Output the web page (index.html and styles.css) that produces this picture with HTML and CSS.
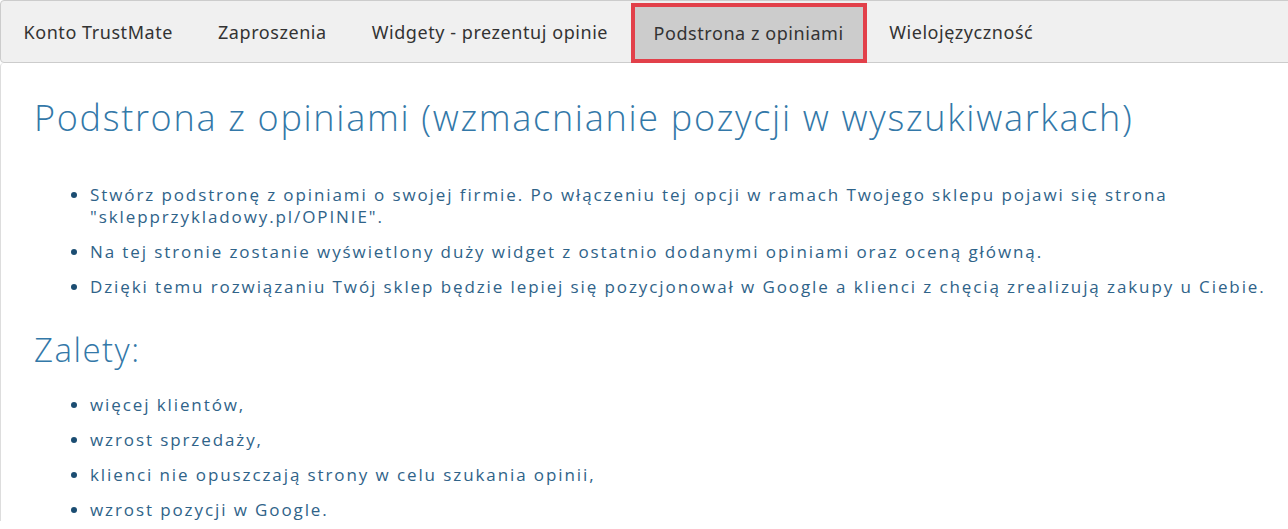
FILE: index.html
```html
<!DOCTYPE html>
<html>
<head>
    <title>Podstrona z opiniami</title>
    <link rel="stylesheet" href="styles.css">
</head>
<body>
    <nav class="tabs">
        <a class="tab" href="#">Konto TrustMate</a>
        <a class="tab" href="#">Zaproszenia</a>
        <a class="tab" href="#">Widgety - prezentuj opinie</a>
        <a class="tab tab-active" href="#">Podstrona z opiniami</a>
        <a class="tab" href="#">Wielojęzyczność</a>
    </nav>

    <div class="panel">
        <h1>Podstrona z opiniami (wzmacnianie pozycji w wyszukiwarkach)</h1>

        <ul class="list">
            <li>Stwórz podstronę z opiniami o swojej firmie. Po włączeniu tej opcji w ramach Twojego sklepu pojawi się strona "sklepprzykladowy.pl/OPINIE".</li>
            <li>Na tej stronie zostanie wyświetlony duży widget z ostatnio dodanymi opiniami oraz oceną główną.</li>
            <li>Dzięki temu rozwiązaniu Twój sklep będzie lepiej się pozycjonował w Google a klienci z chęcią zrealizują zakupy u Ciebie.</li>
        </ul>

        <h2>Zalety:</h2>

        <ul class="list">
            <li>więcej klientów,</li>
            <li>wzrost sprzedaży,</li>
            <li>klienci nie opuszczają strony w celu szukania opinii,</li>
            <li>wzrost pozycji w Google.</li>
        </ul>
    </div>
</body>
</html>
```

FILE: styles.css
```css
:root {
    --nav-bg: #f0f0f0;
    --nav-border: #cccccc;
    --highlight: #e2404a;
    --heading: #3378a8;
    --text: #2f6389;
    --bullet: #1b4d72;
}

body {
    margin: 0;
    font-family: 'Open Sans', 'Noto Sans', sans-serif;
    background-color: white;
    overflow: hidden;
}

.tabs {
    display: flex;
    height: 63px;
    background-color: var(--nav-bg);
    border: 1px solid var(--nav-border);
    border-radius: 4px;
    box-sizing: border-box;
    width: 1400px;
}

.tab {
    display: flex;
    align-items: center;
    padding: 0 22.5px;
    font-family: 'Noto Sans', sans-serif;
    font-size: 18px;
    letter-spacing: 0.56px;
    color: #333;
    text-decoration: none;
}

.tab-active {
    background-color: #cccccc;
    border: 4px solid var(--highlight);
    padding: 0 19px;
    margin: 2px 0 -1px;
}

.panel {
    width: 1400px;
    padding: 33px 0 0 33px;
    border-left: 1px solid #dddddd;
    border-top-left-radius: 4px;
    box-sizing: border-box;
}

h1 {
    margin: 0 0 45px;
    font-size: 36px;
    line-height: 43px;
    font-weight: 300;
    letter-spacing: 1.7px;
    color: var(--heading);
}

h2 {
    margin: 32px 0 24px;
    font-size: 33px;
    line-height: 40px;
    font-weight: 300;
    letter-spacing: 1.5px;
    color: var(--heading);
}

.list {
    margin: 0;
    padding-left: 56px;
    width: 1195px;
    font-size: 17px;
    line-height: 22px;
    letter-spacing: 1.9px;
    color: var(--text);
}

.list li {
    margin-bottom: 13px;
}

.list li::marker {
    color: var(--bullet);
}
```
